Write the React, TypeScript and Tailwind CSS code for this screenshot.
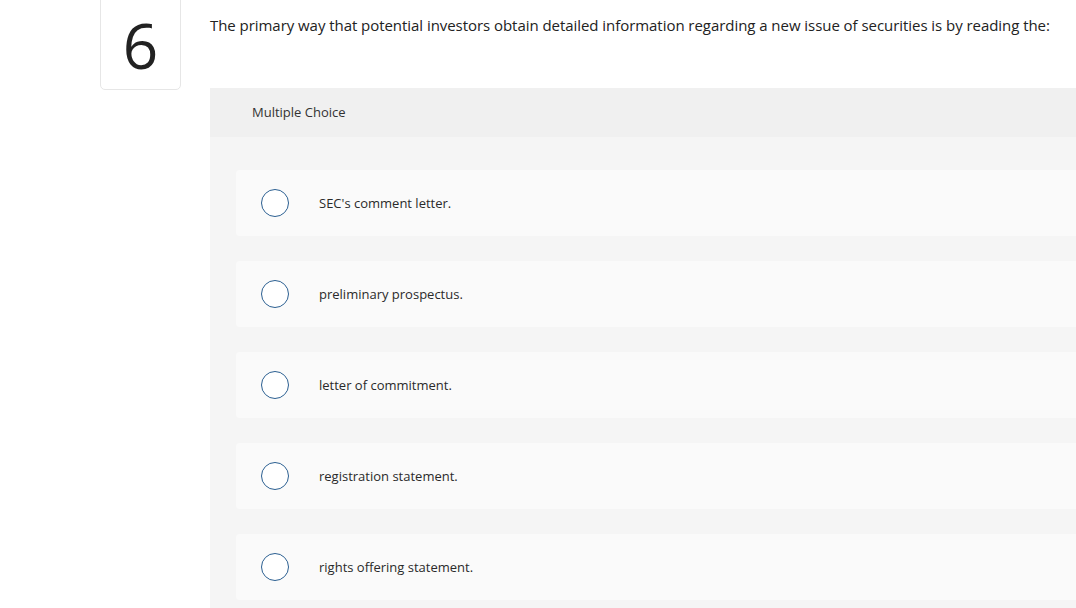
import React from 'react'

const options = [
  "SEC's comment letter.",
  'preliminary prospectus.',
  'letter of commitment.',
  'registration statement.',
  'rights offering statement.',
]

export default function App() {
  return (
    <div className="flex min-h-[608px] w-[1076px] overflow-hidden bg-white font-['Open_Sans','Lato',sans-serif] text-[#1f1f1f]">
      {/* Question number */}
      <div className="w-[210px] shrink-0 pl-[100px] pr-[29px]">
        <div className="-mt-2 flex h-[98px] w-[81px] items-center justify-center rounded-[5px] border border-[#e6e6e6] pt-2">
          <span className="text-[62px] font-normal leading-none text-[#222]">6</span>
        </div>
      </div>

      <div className="flex flex-1 flex-col">
        <p className="pt-[15px] text-[15px] leading-[20px] tracking-[-0.05px] text-[#222]">
          The primary way that potential investors obtain detailed information regarding a new issue of securities is by reading the:
        </p>

        <div className="mt-[53px] flex flex-1 flex-col bg-[#f5f5f5]">
          <div className="flex h-[49px] items-center bg-[#f0f0f0] pl-[42px] text-[13px] text-[#333]">
            Multiple Choice
          </div>
          <div className="flex flex-col gap-[25px] pl-[26px] pt-[33px]">
            {options.map((opt) => (
              <div key={opt} className="flex h-[66px] items-center rounded-l-[4px] bg-[#fafafa] pl-[25px]">
                <span className="h-[28px] w-[28px] shrink-0 rounded-full border-[1.5px] border-[#2b5f91] bg-white" />
                <span className="ml-[30px] pt-[1px] text-[13px] text-[#2a2a2a]">{opt}</span>
              </div>
            ))}
          </div>
        </div>
      </div>
    </div>
  )
}
